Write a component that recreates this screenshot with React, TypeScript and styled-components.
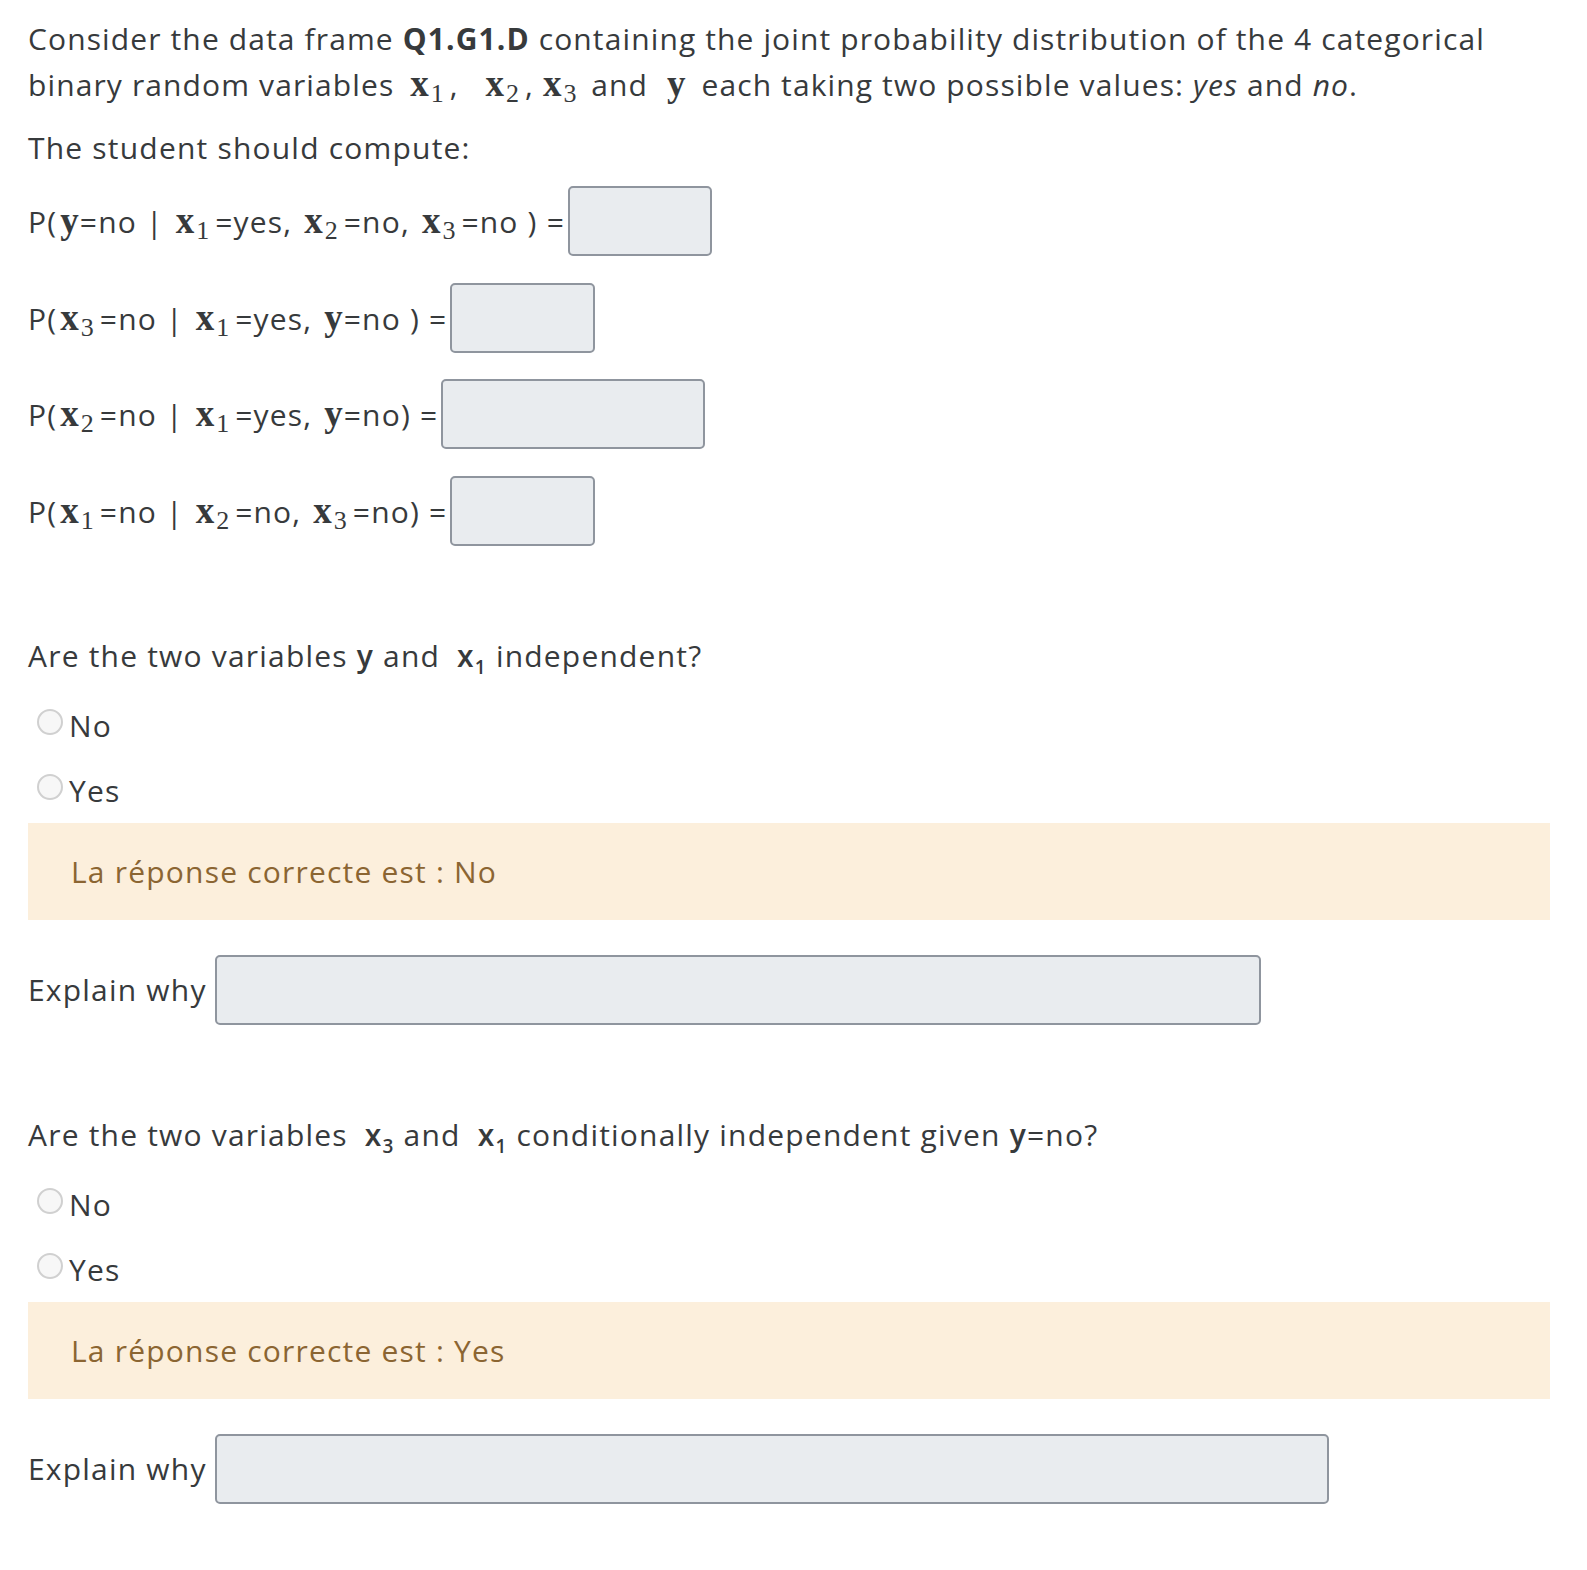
import React from "react";
import styled, { createGlobalStyle } from "styled-components";

const GlobalStyle = createGlobalStyle`
  body {
    margin: 0;
    background: #ffffff;
    font-family: "Open Sans", "Noto Sans", sans-serif;
    font-size: 30px;
    line-height: 45px;
    letter-spacing: 1.2px;
    color: #373a3c;
  }
`;

const Page = styled.div`
  padding: 16px 37px 40px 28px;
`;

const Para = styled.p<{ $gap?: number; $spacing?: number }>`
  margin: 0 0 ${(p) => p.$gap ?? 0}px;
  ${(p) => (p.$spacing !== undefined ? `letter-spacing: ${p.$spacing}px;` : "")}
`;

const Bold = styled.strong`
  font-weight: 700;
`;

const MathVar = styled.span<{ $lead?: number; $trail?: number }>`
  font-family: "Liberation Serif", "DejaVu Serif", serif;
  font-weight: 700;
  font-size: 37px;
  letter-spacing: 0;
  margin: 0 ${(p) => 1 + (p.$trail ?? 0)}px 0 ${(p) => 3 + (p.$lead ?? 0)}px;
`;

const MathSub = styled.sub`
  font-family: "Liberation Serif", "DejaVu Serif", serif;
  font-weight: 400;
  font-size: 26px;
  letter-spacing: 0;
  line-height: 0;
  vertical-align: -6px;
  margin: 0 6px 0 1px;
`;

const InlineVar = styled.span<{ $tight?: boolean }>`
  font-weight: 600;
  margin-left: ${(p) => (p.$tight ? 0 : 8)}px;
`;

const InlineSub = styled.sub`
  font-size: 19px;
  font-weight: 600;
  line-height: 0;
  vertical-align: -7px;
`;

const FormulaList = styled.div`
  display: flex;
  flex-direction: column;
  gap: 26.5px;
  margin-bottom: 87px;
`;

const FormulaRow = styled.div`
  display: flex;
  align-items: center;
  height: 70px;
`;

const FormulaText = styled.span`
  white-space: pre;
`;

const AnswerBox = styled.div<{ $w: number }>`
  width: ${(p) => p.$w}px;
  height: 70px;
  box-sizing: border-box;
  margin-left: 3px;
  background: #e9ecef;
  border: 2px solid #8f959e;
  border-radius: 5px;
`;

const Question = styled.div`
  margin-bottom: 25px;
`;

const Options = styled.div`
  display: flex;
  flex-direction: column;
  gap: 20px;
  margin-bottom: 10px;
`;

const Option = styled.label`
  display: flex;
  align-items: center;
  padding-left: 9px;
  gap: 6px;
`;

const Radio = styled.span`
  width: 26px;
  height: 26px;
  box-sizing: border-box;
  border-radius: 50%;
  border: 2px solid #d0d0d0;
  background: #f7f7f7;
  margin-top: -7px;
`;

const Feedback = styled.div`
  background: #fcefdc;
  color: #8b6532;
  padding: 26px 43px;
  margin-bottom: 35px;
`;

const ExplainRow = styled.div`
  display: flex;
  align-items: center;
  gap: 8px;
  margin-bottom: 87px;
`;

const ExplainBox = styled.div<{ $w: number }>`
  width: ${(p) => p.$w}px;
  height: 70px;
  box-sizing: border-box;
  background: #e9ecef;
  border: 2px solid #8f959e;
  border-radius: 5px;
`;

const X = ({ n, lead, trail }: { n?: number; lead?: number; trail?: number }) => (
  <>
    <MathVar $lead={lead} $trail={trail}>
      {n ? "x" : "y"}
    </MathVar>
    {n ? <MathSub>{n}</MathSub> : null}
  </>
);

const Q = ({ n }: { n: number }) => (
  <InlineVar>
    x<InlineSub>{n}</InlineSub>
  </InlineVar>
);

const formulas: { parts: React.ReactNode; w: number }[] = [
  {
    parts: (
      <>
        P(<X />=no | <X n={1} />=yes, <X n={2} />=no, <X n={3} />=no ) =
      </>
    ),
    w: 144,
  },
  {
    parts: (
      <>
        P(<X n={3} />=no | <X n={1} />=yes, <X />=no ) =
      </>
    ),
    w: 145,
  },
  {
    parts: (
      <>
        P(<X n={2} />=no | <X n={1} />=yes, <X />=no) =
      </>
    ),
    w: 264,
  },
  {
    parts: (
      <>
        P(<X n={1} />=no | <X n={2} />=no, <X n={3} />=no) =
      </>
    ),
    w: 145,
  },
];

const Choice = ({ label }: { label: string }) => (
  <Option>
    <Radio />
    {label}
  </Option>
);

export default function App() {
  return (
    <>
      <GlobalStyle />
      <Page>
        <Para $gap={18} $spacing={1.12}>
          Consider the data frame <Bold>Q1.G1.D</Bold> containing the joint probability distribution of the 4
          categorical binary random variables <X n={1} lead={4} />, <X n={2} lead={15} />,{" "}
          <X n={3} lead={-3} /> and <X lead={7} trail={6} /> each taking two possible values: <em>yes</em> and{" "}
          <em>no</em>.
        </Para>
        <Para $gap={16}>The student should compute:</Para>
        <FormulaList>
          {formulas.map((f, i) => (
            <FormulaRow key={i}>
              <FormulaText>{f.parts}</FormulaText>
              <AnswerBox $w={f.w} />
            </FormulaRow>
          ))}
        </FormulaList>

        <Question>
          Are the two variables <InlineVar $tight>y</InlineVar> and <Q n={1} /> independent?
        </Question>
        <Options>
          <Choice label="No" />
          <Choice label="Yes" />
        </Options>
        <Feedback>La réponse correcte est : No</Feedback>
        <ExplainRow>
          Explain why
          <ExplainBox $w={1046} />
        </ExplainRow>

        <Question>
          Are the two variables <Q n={3} /> and <Q n={1} /> conditionally independent given{" "}
          <InlineVar $tight>y</InlineVar>=no?
        </Question>
        <Options>
          <Choice label="No" />
          <Choice label="Yes" />
        </Options>
        <Feedback>La réponse correcte est : Yes</Feedback>
        <ExplainRow>
          Explain why
          <ExplainBox $w={1114} />
        </ExplainRow>
      </Page>
    </>
  );
}
